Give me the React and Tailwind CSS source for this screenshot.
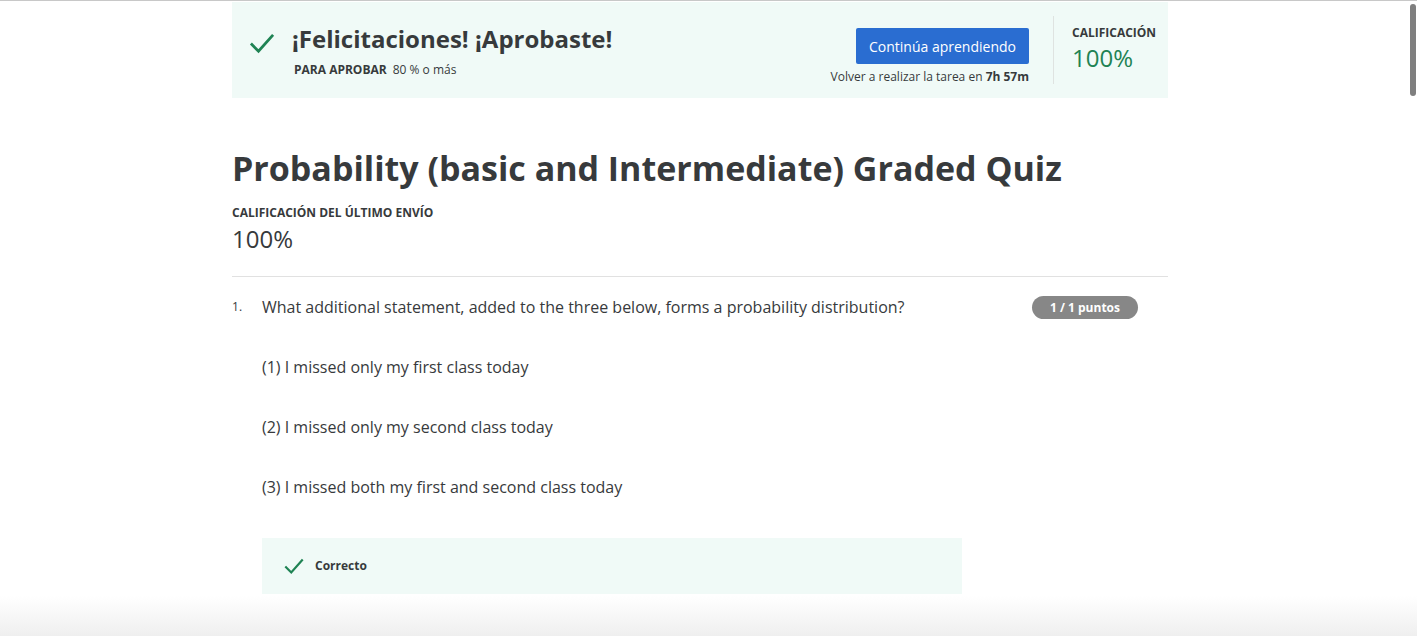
import React from "react";

const QUESTION = {
  number: 1,
  text: "What additional statement, added to the three below, forms a probability distribution?",
  points: "1 / 1 puntos",
  lines: [
    "(1) I missed only my first class today",
    "(2) I missed only my second class today",
    "(3) I missed both my first and second class today",
  ],
};

function Check({ className }) {
  return (
    <svg viewBox="0 0 24 24" className={className} fill="none" stroke="currentColor" strokeWidth="2.4">
      <path d="M2.5 12.5l6.5 6.5L21.5 5" />
    </svg>
  );
}

function ResultBanner() {
  return (
    <div className="flex items-stretch bg-[#f0faf7] h-[96px]">
      <div className="flex-1 flex pl-4 pt-[28px]">
        <Check className="w-[28px] h-[28px] text-[#1f8354] mt-[-1px]" />
        <div className="ml-[16px] mt-[-5px]">
          <div className="text-[24px] leading-[28px] font-bold text-[#373a3c]">¡Felicitaciones! ¡Aprobaste!</div>
          <div className="mt-[9px] text-[12px] leading-[16px] text-[#373a3c] pl-[2px]">
            <span className="font-bold">PARA APROBAR</span>
            <span className="ml-[6px]">80 % o más</span>
          </div>
        </div>
      </div>
      <div className="flex flex-col items-end pt-[26px] pr-[24px]">
        <button className="h-[36px] w-[173px] rounded-[2px] bg-[#2a6dd1] text-white text-[14px] font-normal">
          Continúa aprendiendo
        </button>
        <div className="mt-[5px] text-[12px] leading-[16px] text-[#373a3c]">
          Volver a realizar la tarea en <span className="font-bold">7h 57m</span>
        </div>
      </div>
      <div className="my-[14px] w-px bg-[#dfe3e1]" />
      <div className="w-[114px] pl-[18px] pt-[24px]">
        <div className="text-[12px] leading-[14px] font-bold text-[#373a3c]">CALIFICACIÓN</div>
        <div className="mt-[6px] text-[24px] leading-[24px] text-[#1f8354]">100%</div>
      </div>
    </div>
  );
}

function Question({ q }) {
  return (
    <div className="flex pt-[17px]">
      <div className="w-[30px] text-[12px] leading-[20px] text-[#373a3c] pt-[3px]">{q.number}.</div>
      <div className="flex-1">
        <div className="flex items-start">
          <div className="flex-1 text-[16px] leading-[24px] text-[#373a3c] pt-[1px]">{q.text}</div>
          <div className="mr-[30px] mt-[2px] h-[23px] w-[106px] rounded-full bg-[#878787] text-white text-[12px] font-bold flex items-center justify-center">
            {q.points}
          </div>
        </div>
        <div className="flex flex-col gap-[36px] mt-[36px] text-[16px] leading-[24px] text-[#373a3c]">
          {q.lines.map((l) => (
            <div key={l}>{l}</div>
          ))}
        </div>
        <div className="mt-[39px] w-[700px] h-[56px] bg-[#f0faf7] flex items-center pl-[21px]">
          <Check className="w-[22px] h-[22px] text-[#1f8354]" />
          <span className="ml-[10px] text-[12px] font-bold text-[#373a3c]">Correcto</span>
        </div>
      </div>
    </div>
  );
}

export default function App() {
  return (
    <div className="relative h-[636px] overflow-hidden bg-white border-t border-[#c8c8c8] font-['Open_Sans',sans-serif]">
      <div className="w-[936px] ml-[232px] pt-[1px]">
        <ResultBanner />
        <h1 className="mt-[48px] text-[34px] leading-[44px] font-bold text-[#373a3c]">
          Probability (basic and Intermediate) Graded Quiz
        </h1>
        <div className="mt-[15px] text-[12px] leading-[16px] font-bold text-[#373a3c]">CALIFICACIÓN DEL ÚLTIMO ENVÍO</div>
        <div className="mt-[2px] text-[24px] leading-[32px] text-[#373a3c]">100%</div>
        <div className="mt-[21px] border-t border-[#e1e1e1]" />
        <Question q={QUESTION} />
      </div>
      <div className="absolute right-[1px] top-[3px] w-[6px] h-[92px] rounded-full bg-[#7f7f7f]" />
      <div className="absolute left-0 right-0 bottom-0 h-[40px] bg-gradient-to-b from-white/0 to-[#efefef]" />
    </div>
  );
}
